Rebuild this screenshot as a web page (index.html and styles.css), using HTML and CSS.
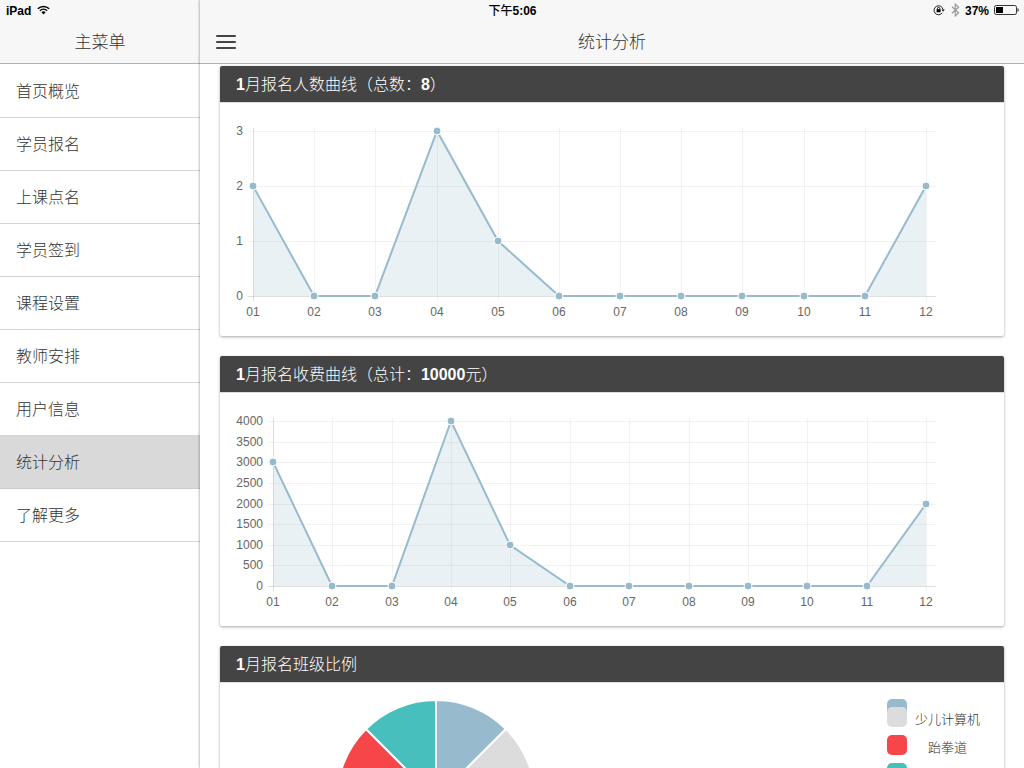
FILE: index.html
```html
<!DOCTYPE html>
<html lang="zh-CN">
<head>
<meta charset="utf-8">
<meta name="viewport" content="width=device-width, initial-scale=1">
<title>统计分析</title>
<link rel="stylesheet" href="styles.css">
</head>
<body>
<div class="app">
  <div class="status">
    <div class="status-side">
      <span>iPad</span>
      <svg class="wifi" width="13" height="10" viewBox="0 0 13 10" aria-hidden="true">
        <path d="M.8 3.7a8.2 8.2 0 0 1 11.4 0M2.9 5.8a5.2 5.2 0 0 1 7.2 0" fill="none" stroke="#000" stroke-width="1.5"/>
        <path d="M4.4 7.3a3 3 0 0 1 4.2 0L6.5 9.6z"/>
      </svg>
    </div>
    <div class="status-time">下午<b>5:06</b></div>
    <div class="status-side status-right">
      <svg width="13" height="12" viewBox="0 0 13 12" aria-hidden="true">
        <path d="M9.2 8.9A4.5 4.5 0 1 1 10 5.6" fill="none" stroke="#222" stroke-width="1"/>
        <path d="M8.4 5.4h3.4l-1.7 2.4z" fill="#222"/>
        <path d="M3.6 5.2h4v3.1h-4z"/>
        <path d="M4.4 5.4V4.6a1.2 1.2 0 0 1 2.4 0v.8" fill="none" stroke="#000" stroke-width=".9"/>
      </svg>
      <svg width="9" height="14" viewBox="0 0 9 14" aria-hidden="true">
        <path d="M1 3.8l6.6 6-3.3 3.1V1.1l3.3 3.1-6.6 6" fill="none" stroke="#999" stroke-width="1.2"/>
      </svg>
      <span>37%</span>
      <svg width="25" height="10" viewBox="0 0 25 10" aria-hidden="true">
        <rect x=".5" y=".5" width="22" height="9" rx="1.8" fill="none" stroke="#333"/>
        <rect x="2" y="2" width="7" height="6"/>
        <path d="M23.6 3v4c1.4-.6 1.4-3.4 0-4z"/>
      </svg>
    </div>
  </div>

  <aside class="side">
    <header class="bar"><h1 class="bar-title">主菜单</h1></header>
    <nav class="menu">
      <a class="menu-item" href="#">首页概览</a>
      <a class="menu-item" href="#">学员报名</a>
      <a class="menu-item" href="#">上课点名</a>
      <a class="menu-item" href="#">学员签到</a>
      <a class="menu-item" href="#">课程设置</a>
      <a class="menu-item" href="#">教师安排</a>
      <a class="menu-item" href="#">用户信息</a>
      <a class="menu-item active" href="#" aria-current="page">统计分析</a>
      <a class="menu-item" href="#">了解更多</a>
    </nav>
  </aside>

  <main class="main">
    <header class="bar">
      <button class="toggle" type="button" aria-label="菜单"><span></span><span></span><span></span></button>
      <h1 class="bar-title">统计分析</h1>
    </header>
    <div class="content">
      <section class="card">
        <h2 class="card-title"><b>1</b>月报名人数曲线（总数：<b>8</b>）</h2>
        <svg class="chart" id="signups" viewBox="0 0 784 233" role="img" aria-label="报名人数"></svg>
      </section>
      <section class="card">
        <h2 class="card-title"><b>1</b>月报名收费曲线（总计：<b>10000</b>元）</h2>
        <svg class="chart" id="fees" viewBox="0 0 784 233" role="img" aria-label="报名收费"></svg>
      </section>
      <section class="card">
        <h2 class="card-title"><b>1</b>月报名班级比例</h2>
        <div class="share">
          <div class="pie-box">
            <svg width="200" height="200" viewBox="-100 -100 200 200" role="img" aria-label="班级比例">
              <g stroke="#fff" stroke-width="2">
                <path fill="#97bbcd" d="M0 0V-99A99 99 0 0 1 70-70z"/>
                <path fill="#dcdcdc" d="M0 0L70-70A99 99 0 0 1 0 99z"/>
                <path fill="#f7464a" d="M0 0V99A99 99 0 0 1-70-70z"/>
                <path fill="#46bfbd" d="M0 0L-70-70A99 99 0 0 1 0-99z"/>
              </g>
            </svg>
          </div>
          <ul class="legend">
            <li class="legend-item unnamed"><i class="swatch blue"></i></li>
            <li class="legend-item"><i class="swatch grey"></i><span>少儿计算机</span></li>
            <li class="legend-item"><i class="swatch red"></i><span>跆拳道</span></li>
            <li class="legend-item unnamed"><i class="swatch teal"></i></li>
          </ul>
        </div>
      </section>
    </div>
  </main>
</div>
<script src="charts.js"></script>
</body>
</html>
```
FILE: styles.css
```css
* { box-sizing: border-box; }

body {
  margin: 0;
  background: #fff;
  color: #333;
  font-family: "Liberation Sans", "Noto Sans CJK SC", sans-serif;
  font-weight: 300;
}

.app {
  position: relative;
  display: flex;
  height: 100vh;
  overflow: hidden;
}

/* The status bar lies over both headers. */
.status {
  position: absolute;
  top: 0;
  left: 0;
  right: 0;
  z-index: 3;
  display: flex;
  align-items: center;
  height: 22px;
  padding: 0 5px 0 6px;
  color: #000;
  font-size: 12px;
  line-height: 18px;
  font-weight: 700;
}
.status-side {
  flex: 1;
  display: flex;
  align-items: center;
  gap: 6px;
}
.status-time { font-weight: 500; }
.status-time b { font-weight: 700; }
.status-right { justify-content: flex-end; gap: 5px; }
.status-side svg { margin-bottom: 2px; }

.bar {
  flex: none;
  position: relative;
  display: flex;
  align-items: center;
  height: 64px;
  padding: 20px 16px 0;
  background: #f7f7f7;
  border-bottom: 1px solid #b2b2b2;
}
.bar-title {
  flex: 1;
  margin: 0;
  padding-top: 2px;
  text-align: center;
  font-size: 17px;
  line-height: 41px;
  font-weight: 300;
}

.side { flex: none; width: 200px; }
.menu { padding-top: 1px; }
.menu-item {
  display: block;
  height: 53px;
  padding: 0 16px;
  border-bottom: 1px solid #d6d6d6;
  color: #333;
  font-size: 16px;
  line-height: 54px;
  text-decoration: none;
}
.menu-item.active {
  background: #d9d9d9;
  border-color: #ccc;
}

.main {
  flex: 1;
  min-width: 0;
  z-index: 1;
  display: flex;
  flex-direction: column;
  background: #fff;
  box-shadow: -1px 0 2px rgba(0, 0, 0, .25);
}
.toggle {
  display: flex;
  flex-direction: column;
  gap: 4px;
  width: 20px;
  margin-right: -20px;
  padding: 0;
  border: 0;
  background: none;
}
.toggle span {
  width: 20px;
  height: 2px;
  background: #444;
  border-radius: 1px;
}

.content {
  flex: 1;
  min-height: 0;
  overflow-y: auto;
  scrollbar-width: none;
  padding: 2px 20px 20px;
}
.card {
  margin-bottom: 20px;
  border-radius: 2px;
  box-shadow: 0 1px 3px rgba(0, 0, 0, .35);
  overflow: hidden;
}
.card-title {
  margin: 0;
  height: 37px;
  padding: 0 16px;
  background: #444;
  border-bottom: 1px solid #ddd;
  color: #fff;
  font-size: 16px;
  line-height: 38px;
  font-weight: 300;
}
.card-title b { font-weight: 700; }

.chart { display: block; width: 100%; }
.chart text { fill: #666; font-size: 12px; }
.chart .x-label { text-anchor: middle; }
.chart .y-label { text-anchor: end; }
.chart .grid { stroke: #000; stroke-opacity: .05; shape-rendering: crispEdges; }
.chart .axis { stroke-opacity: .12; }
.chart .area { fill: #97bbcd; fill-opacity: .2; }
.chart .line { fill: none; stroke: #97bbcd; stroke-width: 2; }
.chart .dot { fill: #97bbcd; stroke: #fff; }

.share {
  display: flex;
  padding: 16px 24px 16px 16px;
}
.pie-box {
  flex: 1;
  padding-left: 100px;
}
.pie-box svg { display: block; }
.legend {
  margin: 0;
  padding: 0;
  list-style: none;
  font-size: 13px;
  line-height: 26px;
}
.legend-item {
  display: flex;
  gap: 8px;
  height: 20px;
  margin-bottom: 8px;
}
.legend-item.unnamed { height: 0; }
.legend-item span { flex: 1; text-align: center; }
.swatch {
  flex: none;
  width: 20px;
  height: 20px;
  border-radius: 5px;
}
.blue { background: #97bbcd; }
.grey { background: #dcdcdc; }
.red { background: #f7464a; }
.teal { background: #46bfbd; }
```
FILE: charts.js
```js
const NS = "http://www.w3.org/2000/svg";
const TOP = 28, BOTTOM = 193, RIGHT = 706;

function add(svg, tag, cls, attrs, text) {
  const el = document.createElementNS(NS, tag);
  el.setAttribute("class", cls);
  for (const key in attrs) el.setAttribute(key, attrs[key]);
  if (text !== undefined) el.textContent = text;
  svg.appendChild(el);
}

function lineChart(id, values, left, max, step) {
  const svg = document.getElementById(id);
  const xs = values.map((v, i) => Math.round(left + (RIGHT - left) * i / (values.length - 1)));
  const yOf = v => Math.round(BOTTOM - (BOTTOM - TOP) * v / max);

  for (let v = 0; v <= max; v += step) {
    const y = yOf(v);
    add(svg, "line", v ? "grid" : "grid axis", { x1: left - 5, x2: RIGHT + 10, y1: y + .5, y2: y + .5 });
    add(svg, "text", "y-label", { x: left - 10, y: y + 4 }, v);
  }
  xs.forEach((x, i) => {
    add(svg, "line", i ? "grid" : "grid axis", { x1: x + .5, x2: x + .5, y1: TOP - 3, y2: BOTTOM + 5 });
    add(svg, "text", "x-label", { x: x, y: BOTTOM + 20 }, String(i + 1).padStart(2, "0"));
  });

  const points = values.map((v, i) => xs[i] + "," + yOf(v)).join(" ");
  add(svg, "polygon", "area", { points: `${left},${BOTTOM} ${points} ${RIGHT},${BOTTOM}` });
  add(svg, "polyline", "line", { points });
  values.forEach((v, i) => add(svg, "circle", "dot", { cx: xs[i], cy: yOf(v), r: 4 }));
}

lineChart("signups", [2, 0, 0, 3, 1, 0, 0, 0, 0, 0, 0, 2], 33, 3, 1);
lineChart("fees", [3000, 0, 0, 4000, 1000, 0, 0, 0, 0, 0, 0, 2000], 53, 4000, 500);
```
